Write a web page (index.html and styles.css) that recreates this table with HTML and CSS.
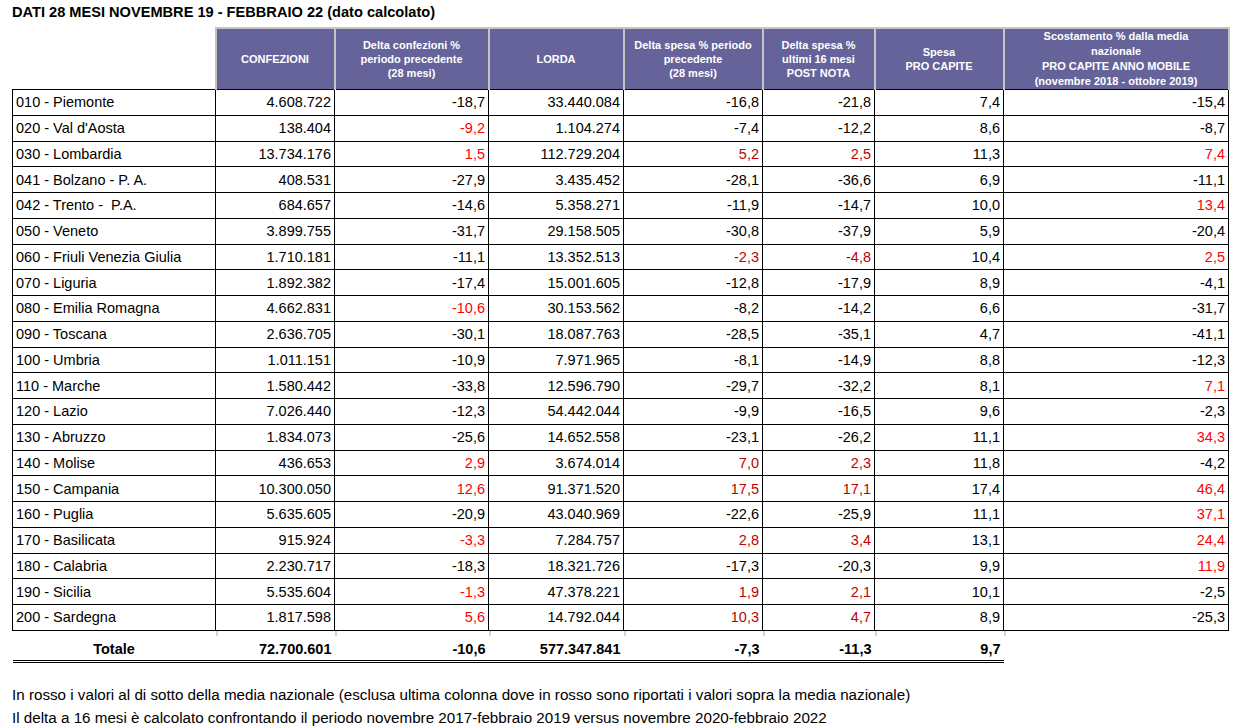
FILE: index.html
```html
<!DOCTYPE html>
<html lang="it">
<head>
<meta charset="utf-8">
<title>Dati 28 mesi</title>
<link rel="stylesheet" href="styles.css">
</head>
<body>
<div class="page">
  <h1 class="title">DATI 28 MESI NOVEMBRE 19 - FEBBRAIO 22 (dato calcolato)</h1>
  <table class="grid">
    <colgroup>
      <col class="c1"><col class="c2"><col class="c3"><col class="c4"><col class="c5"><col class="c6"><col class="c7"><col class="c8">
    </colgroup>
    <thead>
      <tr>
        <th class="blank"></th>
        <th>CONFEZIONI</th>
        <th>Delta confezioni %<br>periodo precedente<br>(28 mesi)</th>
        <th>LORDA</th>
        <th>Delta spesa % periodo<br>precedente<br>(28 mesi)</th>
        <th>Delta spesa %<br>ultimi 16 mesi<br>POST NOTA</th>
        <th>Spesa<br>PRO CAPITE</th>
        <th class="last">Scostamento % dalla media<br>nazionale<br>PRO CAPITE ANNO MOBILE<br>(novembre 2018 - ottobre 2019)</th>
      </tr>
    </thead>
    <tbody>
      <tr><td>010 - Piemonte</td><td>4.608.722</td><td>-18,7</td><td>33.440.084</td><td>-16,8</td><td>-21,8</td><td>7,4</td><td>-15,4</td></tr>
      <tr><td>020 - Val d'Aosta</td><td>138.404</td><td class="r">-9,2</td><td>1.104.274</td><td>-7,4</td><td>-12,2</td><td>8,6</td><td>-8,7</td></tr>
      <tr><td>030 - Lombardia</td><td>13.734.176</td><td class="r">1,5</td><td>112.729.204</td><td class="d">5,2</td><td class="d">2,5</td><td>11,3</td><td class="r">7,4</td></tr>
      <tr><td>041 - Bolzano - P. A.</td><td>408.531</td><td>-27,9</td><td>3.435.452</td><td>-28,1</td><td>-36,6</td><td>6,9</td><td>-11,1</td></tr>
      <tr><td>042 - Trento - &nbsp;P.A.</td><td>684.657</td><td>-14,6</td><td>5.358.271</td><td>-11,9</td><td>-14,7</td><td>10,0</td><td class="r">13,4</td></tr>
      <tr><td>050 - Veneto</td><td>3.899.755</td><td>-31,7</td><td>29.158.505</td><td>-30,8</td><td>-37,9</td><td>5,9</td><td>-20,4</td></tr>
      <tr><td>060 - Friuli Venezia Giulia</td><td>1.710.181</td><td>-11,1</td><td>13.352.513</td><td class="d">-2,3</td><td class="d">-4,8</td><td>10,4</td><td class="r">2,5</td></tr>
      <tr><td>070 - Liguria</td><td>1.892.382</td><td>-17,4</td><td>15.001.605</td><td>-12,8</td><td>-17,9</td><td>8,9</td><td>-4,1</td></tr>
      <tr><td>080 - Emilia Romagna</td><td>4.662.831</td><td class="r">-10,6</td><td>30.153.562</td><td>-8,2</td><td>-14,2</td><td>6,6</td><td>-31,7</td></tr>
      <tr><td>090 - Toscana</td><td>2.636.705</td><td>-30,1</td><td>18.087.763</td><td>-28,5</td><td>-35,1</td><td>4,7</td><td>-41,1</td></tr>
      <tr><td>100 - Umbria</td><td>1.011.151</td><td>-10,9</td><td>7.971.965</td><td>-8,1</td><td>-14,9</td><td>8,8</td><td>-12,3</td></tr>
      <tr><td>110 - Marche</td><td>1.580.442</td><td>-33,8</td><td>12.596.790</td><td>-29,7</td><td>-32,2</td><td>8,1</td><td class="r">7,1</td></tr>
      <tr><td>120 - Lazio</td><td>7.026.440</td><td>-12,3</td><td>54.442.044</td><td>-9,9</td><td>-16,5</td><td>9,6</td><td>-2,3</td></tr>
      <tr><td>130 - Abruzzo</td><td>1.834.073</td><td>-25,6</td><td>14.652.558</td><td>-23,1</td><td>-26,2</td><td>11,1</td><td class="r">34,3</td></tr>
      <tr><td>140 - Molise</td><td>436.653</td><td class="r">2,9</td><td>3.674.014</td><td class="d">7,0</td><td class="d">2,3</td><td>11,8</td><td>-4,2</td></tr>
      <tr><td>150 - Campania</td><td>10.300.050</td><td class="r">12,6</td><td>91.371.520</td><td class="d">17,5</td><td class="d">17,1</td><td>17,4</td><td class="r">46,4</td></tr>
      <tr><td>160 - Puglia</td><td>5.635.605</td><td>-20,9</td><td>43.040.969</td><td>-22,6</td><td>-25,9</td><td>11,1</td><td class="r">37,1</td></tr>
      <tr><td>170 - Basilicata</td><td>915.924</td><td class="r">-3,3</td><td>7.284.757</td><td class="d">2,8</td><td class="d">3,4</td><td>13,1</td><td class="r">24,4</td></tr>
      <tr><td>180 - Calabria</td><td>2.230.717</td><td>-18,3</td><td>18.321.726</td><td>-17,3</td><td>-20,3</td><td>9,9</td><td class="r">11,9</td></tr>
      <tr><td>190 - Sicilia</td><td>5.535.604</td><td class="r">-1,3</td><td>47.378.221</td><td class="d">1,9</td><td class="d">2,1</td><td>10,1</td><td>-2,5</td></tr>
      <tr><td>200 - Sardegna</td><td>1.817.598</td><td class="r">5,6</td><td>14.792.044</td><td class="d">10,3</td><td class="d">4,7</td><td>8,9</td><td>-25,3</td></tr>
    </tbody>
    <tfoot>
      <tr><td>Totale</td><td>72.700.601</td><td>-10,6</td><td>577.347.841</td><td>-7,3</td><td>-11,3</td><td>9,7</td><td class="empty"></td></tr>
    </tfoot>
  </table>
  <div class="notes">
    <p>In rosso i valori al di sotto della media nazionale (esclusa ultima colonna dove in rosso sono riportati i valori sopra la media nazionale)</p>
    <p>Il delta a 16 mesi è calcolato confrontando il periodo novembre 2017-febbraio 2019 versus novembre 2020-febbraio 2022</p>
  </div>
</div>
</body>
</html>
```

FILE: styles.css
```css
html, body {
  margin: 0;
  padding: 0;
  background: #ffffff;
}

.page {
  padding: 4px 8px 0 12px;
  font-family: "Liberation Sans", Arial, sans-serif;
  color: #000;
}

.title {
  margin: 0;
  height: 23px;
  font-size: 14.6px;
  font-weight: bold;
  line-height: 17px;
}

.grid {
  border-collapse: collapse;
  table-layout: fixed;
  width: 1216px;
  font-size: 14.5px;
}

.c1 { width: 203px; }
.c2 { width: 119px; }
.c3 { width: 154px; }
.c4 { width: 135px; }
.c5 { width: 139px; }
.c6 { width: 112px; }
.c7 { width: 129px; }
.c8 { width: 225px; }

.grid th {
  height: 60px;
  padding: 0 2px;
  background: #656399;
  color: #ffffff;
  font-size: 11px;
  font-weight: bold;
  line-height: 14px;
  text-align: center;
  vertical-align: middle;
  border: 2px solid #c4c4c4;
  border-bottom: 1px solid #000;
}

.grid th.last {
  line-height: 15px;
  vertical-align: bottom;
}

.grid th.blank {
  background: transparent;
  border-top: none;
  border-left: none;
  border-right: 2px solid #c4c4c4;
}

.grid tbody td {
  height: 24.75px;
  padding: 0 3px;
  border: 1px solid #000;
  text-align: right;
  vertical-align: middle;
  white-space: nowrap;
  line-height: 18px;
}

.grid tbody td:first-child {
  text-align: left;
}

.grid td.r { color: #ff0000; }
.grid td.d { color: #c00000; }

.grid tfoot td {
  height: 27px;
  padding: 0 3px 2px;
  font-weight: bold;
  text-align: right;
  vertical-align: bottom;
  line-height: 18px;
  border-bottom: 3px double #000;
  border-top: 1px solid #000;
  background: linear-gradient(#d4d4d4, #d4d4d4) left top / 2px 5px no-repeat;
}

.grid tfoot td:first-child {
  text-align: center;
  background: none;
}

.grid tfoot td.empty {
  border-bottom: none;
  border-top: 1px solid #000;
}

.notes {
  margin-top: 23px;
  font-size: 15.2px;
}

.notes p {
  margin: 0;
  height: 23px;
  line-height: 18px;
}
```
